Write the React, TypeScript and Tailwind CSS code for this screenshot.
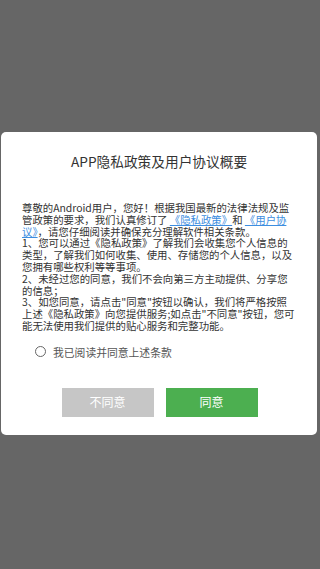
import { useState } from 'react';

// Privacy-policy consent dialog over a dimmed screen.

const font = { fontFamily: '"Noto Sans CJK SC", "Liberation Sans", sans-serif' };

function Link({ children }: { children: React.ReactNode }) {
  return <span className="text-[#3d8ee0] underline underline-offset-1">{children}</span>;
}

export default function App() {
  const [agreed, setAgreed] = useState(false);

  return (
    <div className="w-[320px] h-[569px] bg-[#666666] pt-[132px] px-[1px]" style={font}>
      <div className="w-[316px] h-[303px] bg-white rounded-[5px] flex flex-col">
        <h1 className="mt-[20px] text-center text-[13.7px] leading-[18px] text-[#333333]">
          APP隐私政策及用户协议概要
        </h1>

        <div className="mt-[32px] pl-[21px] text-[10.4px] leading-[11.8px] text-[#333333] whitespace-nowrap">
          <div>尊敬的Android用户，您好！根据我国最新的法律法规及监</div>
          <div>
            管政策的要求，我们认真修订了 <Link>《隐私政策》</Link>和 <Link>《用户协</Link>
          </div>
          <div>
            <Link>议》</Link>，请您仔细阅读并确保充分理解软件相关条款。
          </div>
          <div>1、您可以通过《隐私政策》了解我们会收集您个人信息的</div>
          <div>类型，了解我们如何收集、使用、存储您的个人信息，以及</div>
          <div>您拥有哪些权利等等事项。</div>
          <div>2、未经过您的同意，我们不会向第三方主动提供、分享您</div>
          <div>的信息；</div>
          <div>3、如您同意，请点击"同意"按钮以确认，我们将严格按照</div>
          <div>上述《隐私政策》向您提供服务;如点击"不同意"按钮，您可</div>
          <div>能无法使用我们提供的贴心服务和完整功能。</div>
        </div>

        <button
          type="button"
          onClick={() => setAgreed((v) => !v)}
          className="mt-[13px] ml-[34px] flex items-center gap-[7px] text-[10.8px] leading-[14px] text-[#555555]"
        >
          <span className="w-[11px] h-[11px] rounded-full border border-[#666666] flex items-center justify-center">
            {agreed && <span className="w-[5px] h-[5px] rounded-full bg-[#4caf50]" />}
          </span>
          我已阅读并同意上述条款
        </button>

        <div className="mt-[29px] flex justify-center gap-[12px] pl-[1px]">
          <button
            type="button"
            className="w-[92px] h-[29px] bg-[#c6c6c6] text-white text-[12px]"
          >
            不同意
          </button>
          <button
            type="button"
            className="w-[92px] h-[29px] bg-[#4caf50] text-white text-[12px]"
          >
            同意
          </button>
        </div>
      </div>
    </div>
  );
}
